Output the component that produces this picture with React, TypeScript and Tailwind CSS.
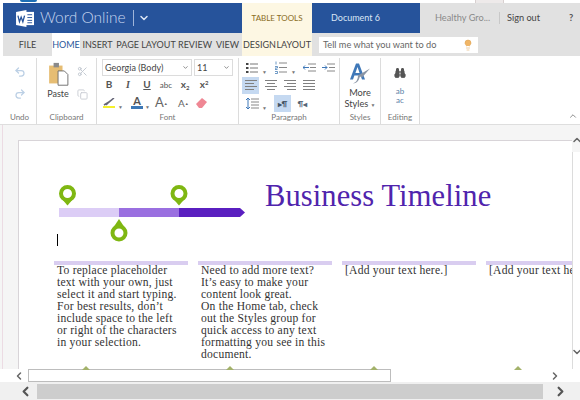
import { ChevronDown, ChevronLeft, ChevronRight, ChevronUp, Lightbulb, Redo2, Scissors, Undo2, Copy, Binoculars } from "lucide-react";

const ui = "font-['Lato','Noto_Sans',sans-serif]";
const serif = "font-['Liberation_Serif',serif]";

function Tab({ label, active, w }: { label: string; active?: boolean; w: string }) {
  return (
    <div className={`${w} flex items-center justify-center whitespace-nowrap text-[9px] ${active ? "bg-white text-[#2b579a]" : "text-[#444]"}`}>
      {label}
    </div>
  );
}

function Group({ label, w, children }: { label: string; w: string; children: React.ReactNode }) {
  return (
    <div className={`${w} shrink-0 h-[66px] mt-[2px] border-r border-[#dcdcdc] flex flex-col`}>
      <div className="flex-1 min-h-0">{children}</div>
      <div className="text-center text-[8px] leading-[12px] pb-[1px] text-[#777]">{label}</div>
    </div>
  );
}

function Lines({ align = "left", className = "" }: { align?: string; className?: string }) {
  const widths = align === "justify" ? [12, 12, 12, 12] : align === "center" ? [12, 8, 12, 8] : [12, 9, 12, 9];
  const items = align === "center" ? "items-center" : align === "right" ? "items-end" : "items-start";
  return (
    <div className={`w-[12px] flex flex-col gap-[2px] ${items} ${className}`}>
      {widths.map((w, i) => (
        <div key={i} className="h-px bg-[#808080]" style={{ width: w }} />
      ))}
    </div>
  );
}

function Caret() {
  return <span className="text-[5px] leading-none text-[#777]">▼</span>;
}

function BulletIcon() {
  return (
    <svg width="12" height="12" viewBox="0 0 12 12">
      <path d="M4 2h8M4 6h8M4 10h8" stroke="#777" />
      <path d="M0 1h2.5v2H0ZM0 5h2.5v2H0ZM0 9h2.5v2H0Z" fill="#444" />
    </svg>
  );
}

function NumberIcon() {
  return (
    <svg width="12" height="13" viewBox="0 0 12 13">
      <path d="M4 2h8M4 6.5h8M4 11h8" stroke="#888" />
      <path d="M1 0.5v3M0 5.5h2.5v1.5H0v1.5h2.5M0 10.5h2.5v2H0" stroke="#4a80b8" strokeWidth="0.8" fill="none" />
    </svg>
  );
}

function IndentIcon({ flip }: { flip?: boolean }) {
  return (
    <svg width="13" height="9" viewBox="0 0 13 9">
      <path d="M5 1h8M7 4.5h6M5 8h8" stroke="#888" />
      {flip ? (
        <path d="M0 4.5h5M3 2.5l2 2-2 2" stroke="#3f78b8" fill="none" />
      ) : (
        <path d="M0 4.5h6M2 2.5l-2 2 2 2" stroke="#3f78b8" fill="none" />
      )}
    </svg>
  );
}

function Pin({ x, y, down }: { x: number; y: number; down?: boolean }) {
  return (
    <g transform={`translate(${x} ${y})`}>
      <path d={down ? "M0 -14 L6 -5 L-6 -5 Z" : "M0 12 L6 5 L-6 5 Z"} fill="#7fb712" />
      <circle r="6.5" fill="#fff" stroke="#7fb712" strokeWidth="4" />
    </g>
  );
}

function Column({ w, children }: { w: string; children: React.ReactNode }) {
  return (
    <div className={`${w} shrink-0`}>
      <div className="h-[4px] bg-[#d9cdf0]" />
      <div className={`pl-[3px] text-[11.6px] tracking-[0.22px] leading-[12px] text-[#333] whitespace-nowrap ${serif}`}>{children}</div>
    </div>
  );
}

function Tick({ className }: { className: string }) {
  return <div className={`absolute top-[-3px] w-0 h-0 border-x-[4px] border-x-transparent border-b-[4px] border-b-[#a3b26a] ${className}`} />;
}

export default function App() {
  return (
    <div className={`w-[580px] h-[400px] overflow-hidden bg-white flex flex-col ${ui}`}>
      <div className="h-[3px] shrink-0 bg-white flex">
        <div className="ml-[20px] w-[17px] h-[2px] bg-[#1f6fb5] rounded-b-full" />
        <div className="ml-[438px] w-[29px] h-[3px] bg-[#eeeaea] border-x border-[#d8d0d0]" />
      </div>

      {/* title + tabs */}
      <div className="flex h-[53px] shrink-0 pl-[3px]">
        <div className="w-[239px] flex flex-col shrink-0">
          <div className="h-[30px] bg-[#26539b] flex items-center text-white">
            <svg width="19" height="17" viewBox="0 0 20 18" className="ml-[13px]">
              <rect x="8" y="2" width="11" height="14" fill="#fff" />
              <path d="M12 5h5M12 8h5M12 11h5M12 13.5h5" stroke="#26539b" />
              <path d="M0 2 L11 0 V18 L0 16 Z" fill="#fff" />
              <path d="M2 6 L3.6 12.5 L5.4 7.5 L7.2 12.5 L9 6" fill="none" stroke="#26539b" strokeWidth="1.4" />
            </svg>
            <span className="ml-[5px] text-[15.5px] leading-none text-[#c6d6ef] font-light whitespace-nowrap">Word Online</span>
            <div className="ml-[7px] w-px h-[16px] bg-[#9fb5d9]" />
            <ChevronDown size={12} strokeWidth={3} className="ml-[4px] text-[#dbe5f5]" />
          </div>
          <div className="h-[23px] bg-[#e1e1e1] flex">
            <Tab label="FILE" w="w-[49px]" />
            <Tab label="HOME" w="w-[28px]" active />
            <Tab label="INSERT" w="w-[35px]" />
            <Tab label="PAGE LAYOUT" w="w-[62px]" />
            <Tab label="REVIEW" w="w-[36px]" />
            <Tab label="VIEW" w="w-[29px]" />
          </div>
        </div>

        <div className="w-[70px] shrink-0 flex flex-col bg-[#fdf7e3]">
          <div className="h-[30px] flex items-center justify-center text-[8px] text-[#8a6d1f] whitespace-nowrap">TABLE TOOLS</div>
          <div className="h-[23px] flex items-center justify-between px-[1px] text-[9px] text-[#444]">
            <span>DESIGN</span>
            <span>LAYOUT</span>
          </div>
        </div>

        <div className="flex-1 flex flex-col bg-[#e1e1e1]">
          <div className="h-[30px] flex">
            <div className="w-[108px] bg-[#26539b] flex items-center pl-[19px] text-[9px] text-[#dbe5f5]">Document 6</div>
            <div className="flex items-center flex-1 text-[9.2px] text-[#444] whitespace-nowrap">
              <span className="ml-[15px] w-[54px] text-[#8a8a8a]">Healthy Gro...</span>
              <div className="ml-[10px] w-px h-[12px] bg-[#c8c8c8]" />
              <span className="ml-[7px] w-[34px]">Sign out</span>
              <span className="ml-[28px] font-bold text-[#555]">?</span>
            </div>
          </div>
          <div className="h-[23px] pt-[4px] pl-[7px]">
            <div className="relative w-[159px] h-[16px] bg-white flex items-center pl-[4px] text-[9.2px] text-[#666] whitespace-nowrap">
              Tell me what you want to do
              <Lightbulb size={12} fill="#f0b566" strokeWidth={1} className="absolute right-[4px] text-[#d99a45]" />
            </div>
          </div>
        </div>
      </div>

      {/* ribbon */}
      <div className="relative h-[69px] shrink-0 bg-white border-b border-[#dedede] flex pl-[3px]">
        <Group label="Undo" w="w-[34px]">
          <div className="flex flex-col items-center gap-[10px] pt-[8px]">
            <Undo2 size={12} strokeWidth={2.5} className="text-[#bcd0e5]" />
            <Redo2 size={12} strokeWidth={2.5} className="text-[#bcd0e5]" />
          </div>
        </Group>
        <Group label="Clipboard" w="w-[60px]">
          <div className="flex pl-[9px] pt-[4px]">
            <div className="flex flex-col items-center w-[24px]">
              <svg width="23" height="25" viewBox="0 0 23 28">
                <rect x="1" y="4" width="15" height="20" fill="#e6bd73" />
                <rect x="6" y="1" width="6" height="5" fill="#8a8a8a" />
                <path d="M11 10h7l4 4v12H11Z" fill="#fff" stroke="#666" />
              </svg>
              <span className="text-[9px] leading-[11px] mt-[1px] text-[#444]">Paste</span>
            </div>
            <div className="flex flex-col gap-[12px] ml-[7px] pt-[4px]">
              <Scissors size={11} className="text-[#bfc6cf]" />
              <Copy size={11} className="text-[#c8ccd2]" />
            </div>
          </div>
        </Group>
        <Group label="Font" w="w-[142px]">
          <div className="pl-[5px] pt-[1px]">
            <div className="flex gap-[2px]">
              <div className="w-[90px] h-[17px] border border-[#dcdcdc] flex items-center justify-between px-[2px] text-[9px] text-[#444] whitespace-nowrap">
                Georgia (Body)<ChevronDown size={7} />
              </div>
              <div className="w-[39px] h-[17px] border border-[#dcdcdc] flex items-center justify-between px-[2px] text-[9px] text-[#444]">
                11<ChevronDown size={7} />
              </div>
            </div>
            <div className="flex items-center h-[17px] text-[10px] text-[#555]">
              <span className="w-[14px] text-center font-bold">B</span>
              <span className="w-[24px] text-center italic font-bold font-['Liberation_Serif',serif]">I</span>
              <span className="w-[14px] text-center underline font-bold">U</span>
              <span className="w-[24px] text-center text-[8px]">abc</span>
              <span className="w-[14px] text-center font-bold">x<sub className="text-[6px]">2</sub></span>
              <span className="w-[24px] text-center font-bold">x<sup className="text-[6px]">2</sup></span>
            </div>
            <div className="flex items-center h-[19px] text-[#666]">
              <div className="w-[13px] flex flex-col items-center">
                <svg width="12" height="8" viewBox="0 0 12 8"><path d="M1 7 L6 4 L11 0 M3 7 L7 3" stroke="#667" strokeWidth="1.6" fill="none" /></svg>
                <div className="w-[12px] h-[2px] bg-[#f5f02c]" />
              </div>
              <span className="ml-[3px] w-[5px]"><Caret /></span>
              <div className="ml-[8px] w-[12px] flex flex-col items-center">
                <span className="text-[11px] leading-[10px] font-bold text-[#555]">A</span>
                <div className="w-[12px] h-[3px] bg-[#3d78b5]" />
              </div>
              <span className="ml-[2px] w-[5px]"><Caret /></span>
              <span className="ml-[5px] w-[21px] text-[13px] leading-none">A<sup className="text-[4px]">▲</sup></span>
              <span className="ml-[2px] w-[14px] text-[10px] leading-none">A<sup className="text-[4px]">▲</sup></span>
              <svg width="13" height="12" viewBox="0 0 13 12" className="ml-[3px]">
                <path d="M1 7 L7 1 L12 5 L7 11 H4 Z" fill="#ef8794" />
              </svg>
            </div>
          </div>
        </Group>
        <Group label="Paragraph" w="w-[101px]">
          <div className="pl-[3px] pt-[1px] flex flex-col">
            <div className="flex items-center h-[17px]">
              <div className="ml-[4px]"><BulletIcon /></div>
              <span className="ml-[4px]"><Caret /></span>
              <div className="ml-[8px]"><NumberIcon /></div>
              <span className="ml-[4px]"><Caret /></span>
              <div className="ml-[7px]"><IndentIcon /></div>
              <div className="ml-[6px]"><IndentIcon flip /></div>
            </div>
            <div className="flex items-center h-[18px]">
              <div className="w-[17px] h-[17px] bg-[#c5d9f1] flex items-center justify-center"><Lines /></div>
              <div className="ml-[4px] w-[15px] flex justify-center"><Lines align="center" /></div>
              <div className="ml-[4px] w-[15px] flex justify-center"><Lines align="right" /></div>
              <div className="ml-[4px] w-[15px] flex justify-center"><Lines align="justify" /></div>
            </div>
            <div className="flex items-center h-[19px]">
              <svg width="13" height="13" viewBox="0 0 13 13" className="ml-[4px]">
                <path d="M5 2h8M5 5h8M5 8h8M5 11h8" stroke="#888" />
                <path d="M2 1v11M0 3l2-2 2 2M0 10l2 2 2-2" stroke="#3f78b8" fill="none" />
              </svg>
              <span className="ml-[3px]"><Caret /></span>
              <div className="ml-[7px] w-[17px] h-[17px] bg-[#c5d9f1] flex items-center justify-center text-[8px] font-bold text-[#456]">▸¶</div>
              <div className="ml-[5px] w-[13px] text-center text-[8px] font-bold text-[#567]">¶◂</div>
            </div>
          </div>
        </Group>
        <Group label="Styles" w="w-[41px]">
          <div className="flex flex-col items-center pt-[4px]">
            <svg width="22" height="23" viewBox="0 0 22 22">
              <path d="M1 17 L7 1 H10 L16 17 H13 L11.6 13 H5.4 L4 17 Z M6.4 10.5 H10.6 L8.5 4.5 Z" fill="#3f78b8" fillRule="evenodd" />
              <path d="M21 6 L13 15 L11 14 Q9 21 4 21 Q9 19 9 13 Z" fill="#8a95a5" />
            </svg>
            <span className="text-[9.2px] leading-[11px] text-[#444] mt-[2px]">More</span>
            <span className="text-[9.2px] leading-[11px] text-[#444] whitespace-nowrap">Styles <Caret /></span>
          </div>
        </Group>
        <Group label="Editing" w="w-[39px]">
          <div className="flex flex-col items-center pt-[9px] gap-[8px]">
            <Binoculars size={12} fill="#555" className="text-[#555]" />
            <span className="flex flex-col items-center text-[8px] leading-[9px] text-[#5b7fa8]"><span>ab</span><span>ac</span></span>
          </div>
        </Group>
        <ChevronUp size={10} strokeWidth={2} className="absolute right-[2px] bottom-[3px] text-[#777]" />
      </div>

      {/* document area */}
      <div className="flex-1 min-h-0 flex flex-col bg-[#f5f5f5]">
        <div className="flex-1 min-h-0 flex pl-[2px]">
          <div className="w-px bg-[#ecdbe3] shrink-0" />
          <div className="flex-1 min-w-0 pt-[15px] pl-[15px] overflow-hidden">
            <div className="w-[600px] h-[240px] bg-white border border-[#d8d4d8] border-b-0 pl-[35px] overflow-hidden">
              <div className="flex h-[120px] pt-[38px]">
                <svg width="188" height="58" viewBox="0 0 188 58" className="shrink-0 ml-[5px] mt-[6px]">
                  <rect x="0" y="23" width="60" height="9" fill="#dccdf6" />
                  <rect x="60" y="23" width="60" height="9" fill="#9a6fe0" />
                  <path d="M120 23 H181 L186 27.5 L181 32 H120 Z" fill="#5a1fc0" />
                  <Pin x={8.5} y={8.5} />
                  <Pin x={120} y={8.5} />
                  <Pin x={60} y={48} down />
                </svg>
                <div className={`ml-[18px] text-[30.5px] tracking-[0.1px] leading-[34px] text-[#5024ad] whitespace-nowrap ${serif}`}>Business Timeline</div>
              </div>
              <div className="w-px h-[12px] bg-black ml-[3px] -mt-[27px] mb-[15px]" />
              <div className="flex gap-[10px]">
                <Column w="w-[134px]">
                  To replace placeholder<br />text with your own, just<br />select it and start typing.<br />For best results, don’t<br />include space to the left<br />or right of the characters<br />in your selection.
                </Column>
                <Column w="w-[134px]">
                  Need to add more text?<br />It’s easy to make your<br />content look great.<br />On the Home tab, check<br />out the Styles group for<br />quick access to any text<br />formatting you see in this<br />document.
                </Column>
                <Column w="w-[134px]">[Add your text here.]</Column>
                <Column w="w-[134px]">[Add your text here.]</Column>
              </div>
            </div>
          </div>
          <div className="w-[8px] shrink-0 flex flex-col overflow-hidden pt-[9px]">
            <ChevronUp size={12} strokeWidth={3} className="-ml-[1px] shrink-0 text-[#666]" />
            <div className="flex-1 mt-[6px] bg-white border-l border-[#dcdcdc] flex flex-col justify-end pb-[11px]">
              <ChevronDown size={12} strokeWidth={3} className="-ml-[2px] shrink-0 text-[#666]" />
            </div>
          </div>
        </div>

        {/* scrollbars */}
        <div className="relative h-[13px] shrink-0 bg-white flex items-center">
          <ChevronLeft size={12} strokeWidth={3} className="ml-[13px] text-[#666]" />
          <div className="ml-[3px] w-[363px] h-[13px] bg-white border border-[#bdbdbd]" />
          <ChevronRight size={12} strokeWidth={3} className="ml-[158px] text-[#666]" />
          <Tick className="left-[82px]" />
          <Tick className="left-[226px]" />
          <Tick className="left-[370px]" />
          <Tick className="left-[514px]" />
        </div>
        <div className="h-[18px] shrink-0 bg-[#f0f0f0] flex items-center">
          <ChevronLeft size={15} strokeWidth={3.5} className="ml-[18px] text-[#555]" />
          <div className="ml-[4px] w-[506px] h-[15px] bg-[#cdcdcd]" />
          <ChevronRight size={15} strokeWidth={3.5} className="ml-[10px] text-[#555]" />
        </div>
      </div>
    </div>
  );
}
